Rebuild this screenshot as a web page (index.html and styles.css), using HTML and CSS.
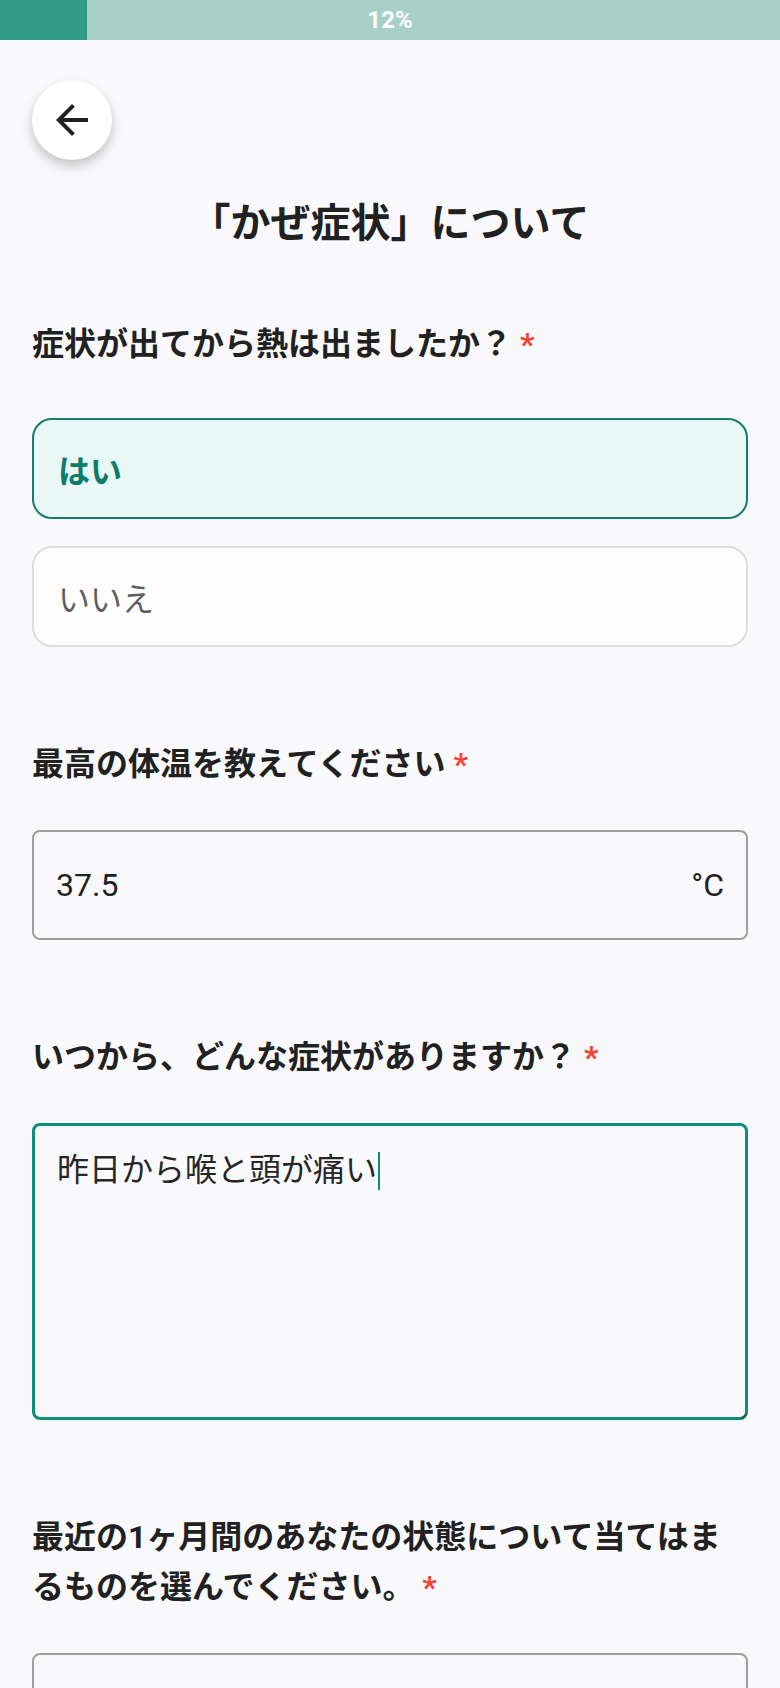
FILE: index.html
```html
<!DOCTYPE html>
<html lang="ja">
<head>
  <meta charset="UTF-8">
  <meta name="viewport" content="width=device-width, initial-scale=1.0">
  <title>かぜ症状について</title>
  <link rel="stylesheet" href="styles.css">
</head>
<body>

<div class="progress">
  <div class="progress-fill"></div>
  <span class="progress-label">12%</span>
</div>

<div class="page">
  <button type="button" class="back-btn" aria-label="戻る">
    <svg viewBox="0 0 24 24" width="48" height="48"><path d="M20 11H7.83l5.59-5.59L12 4l-8 8 8 8 1.41-1.41L7.83 13H20v-2z" fill="#212121"/></svg>
  </button>

  <h1 class="title">「かぜ症状」について</h1>

  <form class="form">
    <div class="question">
      <p class="q-label">症状が出てから熱は出ましたか？ <span class="req">*</span></p>
      <div class="options">
        <div class="option selected">はい</div>
        <div class="option">いいえ</div>
      </div>
    </div>

    <div class="question">
      <p class="q-label">最高の体温を教えてください <span class="req">*</span></p>
      <div class="field">
        <span class="field-value">37.5</span>
        <span class="field-unit">°C</span>
      </div>
    </div>

    <div class="question">
      <p class="q-label">いつから、どんな症状がありますか？ <span class="req">*</span></p>
      <div class="textbox" role="textbox">
        <span>昨日から喉と頭が痛い</span><span class="caret"></span>
        <span class="grip"></span>
      </div>
    </div>

    <div class="question">
      <p class="q-label">最近の1ヶ月間のあなたの状態について当てはまるものを選んでください。 <span class="req">*</span></p>
      <div class="select-box"></div>
    </div>
  </form>
</div>

</body>
</html>
```

FILE: styles.css
```css
body {
  margin: 0;
  background: #f9f9fb;
  font-family: Roboto, "Noto Sans CJK JP", sans-serif;
  color: #212121;
}

/* Progress bar */
.progress {
  position: relative;
  height: 40px;
  background: #a7d0c7;
}
.progress-fill {
  width: 87px;
  height: 100%;
  background: #339a86;
}
.progress-label {
  position: absolute;
  left: 0;
  right: 0;
  top: 0;
  line-height: 40px;
  text-align: center;
  color: #fff;
  font-size: 24px;
  font-weight: bold;
}

.page { padding: 0 32px; }

.back-btn {
  display: flex;
  align-items: center;
  justify-content: center;
  width: 80px;
  height: 80px;
  margin-top: 40px;
  padding: 0;
  border: none;
  border-radius: 50%;
  background: #fff;
  box-shadow: 0 6px 12px rgba(0, 0, 0, 0.22);
  cursor: pointer;
}

.title {
  margin: 36px 0 0;
  font-size: 40px;
  line-height: 56px;
  font-weight: bold;
  text-align: center;
}

.form {
  display: flex;
  flex-direction: column;
  gap: 92px;
  padding-top: 67px;
}

.q-label {
  margin: 0 0 41px;
  font-size: 32px;
  line-height: 50px;
  font-weight: bold;
}
.req { color: #f44336; }

.options {
  display: flex;
  flex-direction: column;
  gap: 27px;
  padding-top: 8px;
}
.option {
  display: flex;
  align-items: center;
  height: 101px;
  box-sizing: border-box;
  padding: 0 24px;
  border: 2px solid #dddddd;
  border-radius: 20px;
  background: #fdfdfe;
  color: #5f5f5f;
  font-size: 32px;
}
.option.selected {
  border-color: #117e6e;
  background: #e9f7f5;
  color: #0d7d6b;
  font-weight: bold;
}

.field {
  display: flex;
  align-items: center;
  justify-content: space-between;
  height: 110px;
  box-sizing: border-box;
  padding: 0 22px;
  border: 2px solid #9e9e9e;
  border-radius: 8px;
  font-size: 32px;
}

.textbox {
  position: relative;
  height: 297px;
  box-sizing: border-box;
  padding: 20px 22px;
  border: 3px solid #0a8f78;
  border-radius: 8px;
  font-size: 32px;
  line-height: 48px;
  color: #262626;
}
.caret {
  display: inline-block;
  width: 2px;
  height: 38px;
  margin-left: 1px;
  vertical-align: -9px;
  background: #0a8f78;
}
.grip {
  position: absolute;
  right: -2px;
  bottom: -2px;
  width: 6px;
  height: 6px;
  background: linear-gradient(135deg, transparent 45%, #444 45%, #444 60%, transparent 60%);
}

.select-box {
  height: 110px;
  border: 2px solid #9e9e9e;
  border-radius: 8px;
}
```
